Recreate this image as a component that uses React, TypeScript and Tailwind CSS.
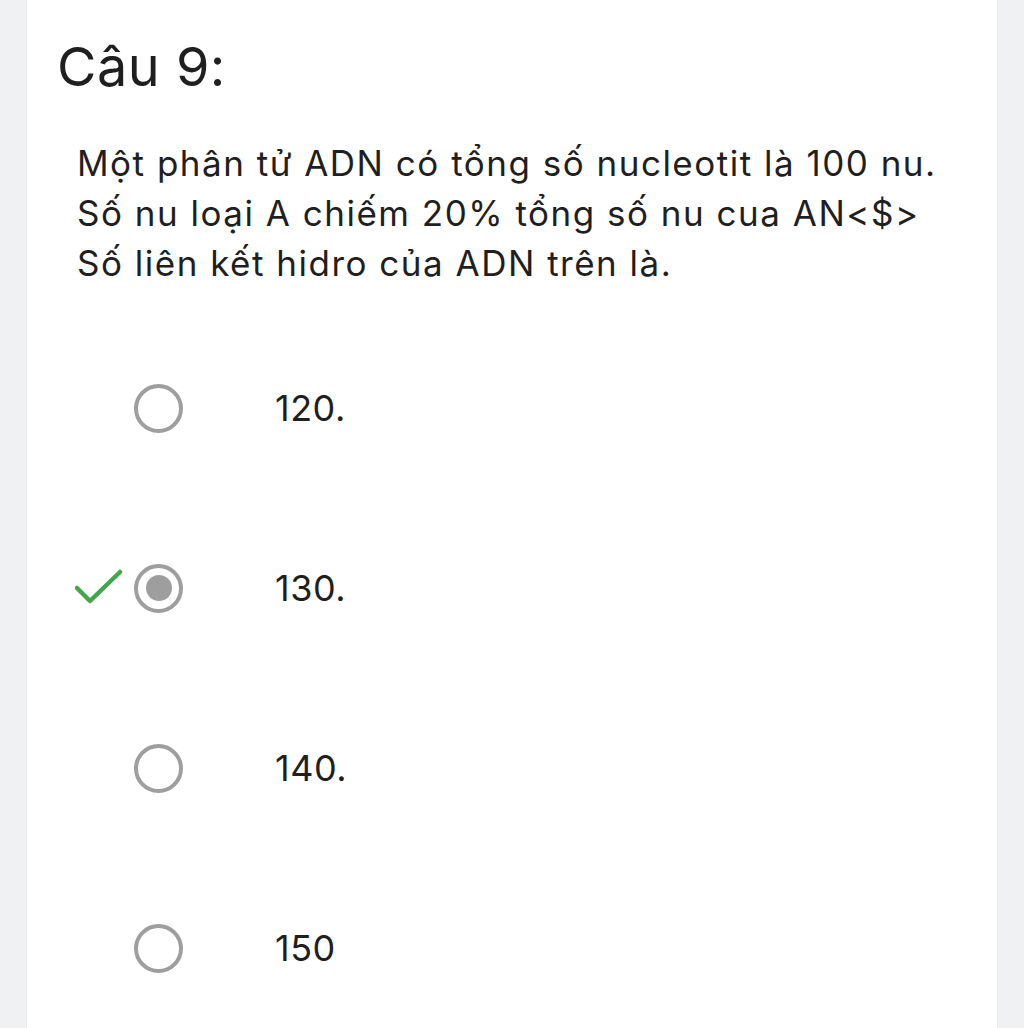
import React from "react";

const options = [
  { label: "120.", selected: false, correct: false },
  { label: "130.", selected: true, correct: true },
  { label: "140.", selected: false, correct: false },
  { label: "150", selected: false, correct: false },
];

const CheckIcon = () => (
  <svg width="48" height="36" viewBox="0 0 48 36" fill="none">
    <path
      d="M2 19 L15 32 L45 3"
      stroke="#43a84a"
      strokeWidth="4.5"
      strokeLinecap="round"
      strokeLinejoin="round"
    />
  </svg>
);

const Radio = ({ selected }: { selected: boolean }) => (
  <div className="w-[49px] h-[49px] rounded-full border-[4.5px] border-[#9e9e9e] flex items-center justify-center shrink-0">
    {selected && <div className="w-[26px] h-[26px] rounded-full bg-[#9e9e9e]" />}
  </div>
);

const App = () => {
  return (
    <div
      className="min-h-screen bg-[#f0f1f3] overflow-hidden"
      style={{ fontFamily: "Inter, 'Noto Sans', sans-serif" }}
    >
      <div className="ml-[27px] w-[970px] h-[1028px] bg-white shadow-[0_0_3px_rgba(0,0,0,0.08)] text-[#1f1f1f]">
        <h1 className="pt-[40px] pl-[30px] text-[54px] leading-none font-normal tracking-[0.5px]">
          Câu 9:
        </h1>
        <div className="mt-[44px] pl-[50px] text-[35px] leading-[50px] tracking-[1.5px]">
          <div>Một phân tử ADN có tổng số nucleotit là 100 nu.</div>
          <div>Số nu loại A chiếm 20% tổng số nu cua AN&lt;$&gt;</div>
          <div>Số liên kết hidro của ADN trên là.</div>
        </div>
        <div className="mt-[30px] flex flex-col">
          {options.map((o) => (
            <div key={o.label} className="h-[180px] flex items-center pl-[48px]">
              <div className="w-[48px] h-[36px] mt-[-2px]">{o.correct && <CheckIcon />}</div>
              <div className="ml-[11px]">
                <Radio selected={o.selected} />
              </div>
              <span className="ml-[92px] text-[36px] leading-none tracking-[0.5px]">{o.label}</span>
            </div>
          ))}
        </div>
      </div>
    </div>
  );
};

export default App;
